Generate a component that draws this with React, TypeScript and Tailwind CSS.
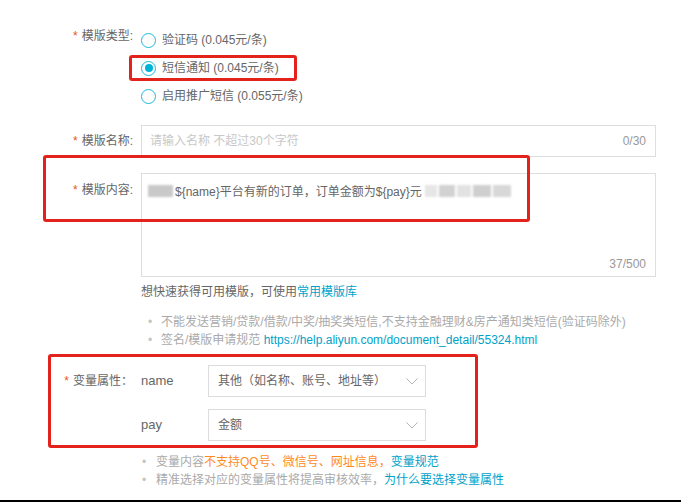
const FONT = { fontFamily: '"Liberation Sans", "Noto Sans CJK SC", sans-serif' };

function Star() {
  return <span className="mr-[4px] text-[#e8541e]">*</span>;
}

function Radio({ checked, label }: { checked?: boolean; label: string }) {
  return (
    <div className="flex h-[28px] items-center">
      <span className="flex h-[15px] w-[15px] items-center justify-center rounded-full border border-[#1fb8d8] bg-white">
        {checked && <span className="h-[8px] w-[8px] rounded-full bg-[#00b4d8]" />}
      </span>
      <span className="ml-[6px] text-[12px] text-[#666]">{label}</span>
    </div>
  );
}

function Select({ value }: { value: string }) {
  return (
    <div className="flex h-[32px] w-[218px] items-center justify-between border border-[#dcdcdc] pl-[9px] pr-[7px] text-[12px] text-[#666]">
      <span>{value}</span>
      <svg width="12" height="7" viewBox="0 0 12 7" fill="none">
        <path d="M0.5 0.5 L6 6 L11.5 0.5" stroke="#b5b5b5" strokeWidth="1" />
      </svg>
    </div>
  );
}

function Blur({ w, c = '#c9c9c9' }: { w: number; c?: string }) {
  return (
    <span
      className="inline-block h-[12px] align-[-1px] blur-[1px]"
      style={{ width: w, background: c }}
    />
  );
}

export default function App() {
  return (
    <div className="relative h-[502px] w-[681px] overflow-hidden bg-white" style={FONT}>
      <div className="flex h-[500px] flex-col pt-[26px] text-[12px]">
        {/* 模版类型 */}
        <div className="flex">
          <div className="w-[133px] text-right leading-[20px] text-[#666]">
            <Star />模版类型:
          </div>
          <div className="ml-[8px] flex flex-col">
            <Radio label="验证码 (0.045元/条)" />
            <Radio checked label="短信通知 (0.045元/条)" />
            <Radio label="启用推广短信 (0.055元/条)" />
          </div>
        </div>

        {/* 模版名称 */}
        <div className="mt-[15px] flex items-center">
          <div className="w-[133px] text-right text-[#666]">
            <Star />模版名称:
          </div>
          <div className="ml-[8px] flex h-[32px] w-[515px] items-center justify-between border border-[#dedede] pl-[8px] pr-[9px]">
            <span className="text-[#c8c8c8]">请输入名称 不超过30个字符</span>
            <span className="text-[#999]">0/30</span>
          </div>
        </div>

        {/* 模版内容 */}
        <div className="mt-[16px] flex">
          <div className="w-[133px] pt-[7px] text-right leading-[20px] text-[#666]">
            <Star />模版内容:
          </div>
          <div className="ml-[8px] flex h-[104px] w-[515px] flex-col justify-between border border-[#dedede] pb-[2px] pl-[6px] pr-[9px] pt-[8px]">
            <div className="leading-[20px] text-[#666]">
              <Blur w={25} />
              <span className="ml-[2px]">{'${name}平台有新的订单，订单金额为${pay}元'}</span>
              <span className="ml-[3px] inline-flex gap-[2px] align-[-1px]">
                <Blur w={12} c="#e6e6e6" />
                <Blur w={16} c="#d2d2d2" />
                <Blur w={14} c="#e2e2e2" />
                <Blur w={18} c="#cfcfcf" />
                <Blur w={18} c="#d8d8d8" />
              </span>
            </div>
            <div className="self-end leading-[20px] text-[#999]">37/500</div>
          </div>
        </div>

        <div className="ml-[141px] mt-[5px] leading-[20px] text-[#666]">
          想快速获得可用模版，可使用<span className="text-[#00a2ca]">常用模版库</span>
        </div>

        <ul className="ml-[148px] mt-[11px] leading-[18px] text-[#aaa]">
          <li className="flex">
            <span className="w-[13px] text-[#c4c4c4]">•</span>
            不能发送营销/贷款/借款/中奖/抽奖类短信,不支持金融理财&房产通知类短信(验证码除外)
          </li>
          <li className="flex">
            <span className="w-[13px] text-[#c4c4c4]">•</span>
            签名/模版申请规范&nbsp;<span className="text-[#00a2ca]">https://help.aliyun.com/document_detail/55324.html</span>
          </li>
        </ul>

        {/* 变量属性 */}
        <div className="mt-[16px] flex">
          <div className="w-[133px] text-right leading-[32px] text-[#666]">
            <Star />变量属性：
          </div>
          <div className="ml-[8px] flex flex-col gap-[12px]">
            <div className="flex items-center">
              <span className="w-[67px] text-[13px] text-[#666]">name</span>
              <Select value="其他（如名称、账号、地址等）" />
            </div>
            <div className="flex items-center">
              <span className="w-[67px] text-[13px] text-[#666]">pay</span>
              <Select value="金额" />
            </div>
          </div>
        </div>

        <ul className="ml-[142px] mt-[12px] leading-[18px] text-[#aaa]">
          <li className="flex">
            <span className="w-[14px] text-[#c4c4c4]">•</span>
            变量内容<span className="text-[#ff8a1c]">不支持QQ号、微信号、网址信息，</span>
            <span className="text-[#00a2ca]">变量规范</span>
          </li>
          <li className="flex">
            <span className="w-[14px] text-[#c4c4c4]">•</span>
            精准选择对应的变量属性将提高审核效率，<span className="text-[#00a2ca]">为什么要选择变量属性</span>
          </li>
        </ul>
      </div>
      <div className="h-[2px] w-full bg-black" />

      {/* annotation boxes */}
      <div className="pointer-events-none absolute left-[129px] top-[55px] h-[26px] w-[168px] rounded-[3px] border-[3px] border-[#e3221c]" />
      <div className="pointer-events-none absolute left-[43px] top-[155px] h-[67px] w-[487px] rounded-[3px] border-[3px] border-[#e3221c]" />
      <div className="pointer-events-none absolute left-[48px] top-[354px] h-[94px] w-[430px] rounded-[3px] border-[3px] border-[#e3221c]" />
    </div>
  );
}
